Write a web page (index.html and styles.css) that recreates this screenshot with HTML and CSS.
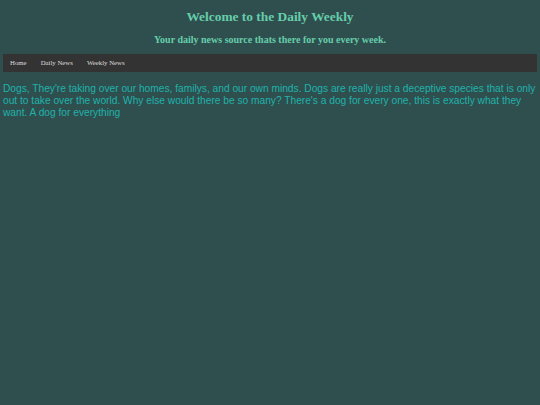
FILE: index.html
```html
<!DOCTYPE html>
<html>
<head>
<meta charset="utf-8">
<link rel="stylesheet" href="styles.css">
</head>
<body>
<header class="masthead">
  <h1 class="title">Welcome to the Daily Weekly</h1>
  <h2 class="tagline">Your daily news source thats there for you every week.</h2>
</header>
<nav class="navbar">
  <a class="nav-link" href="#">Home</a>
  <a class="nav-link" href="#">Daily News</a>
  <a class="nav-link" href="#">Weekly News</a>
</nav>
<p class="story">Dogs, They're taking over our homes, familys, and our own minds. Dogs are really just a deceptive species that is only out to take over the world. Why else would there be so many? There's a dog for every one, this is exactly what they want. A dog for everything</p>
</body>
</html>
```
FILE: styles.css
```css
html, body {
  background: #2f4f4f;
}
body {
  margin: 0;
  padding: 0 3px;
  font-family: "Liberation Serif", serif;
}
.masthead {
  text-align: center;
  color: #66cdaa;
  padding-top: 9px;
}
.title {
  margin: 0;
  font-size: 13.4px;
  line-height: 16px;
  font-weight: bold;
}
.tagline {
  margin: 9px 0 0;
  font-size: 10px;
  line-height: 12px;
  font-weight: bold;
}
.navbar {
  margin-top: 8px;
  background: #333333;
  display: flex;
  height: 18px;
  align-items: center;
}
.nav-link {
  color: #dddddd;
  text-decoration: none;
  font-size: 6.8px;
  padding: 0 7px;
  line-height: 8px;
}
.story {
  margin: 11px 0 0;
  font-family: "Liberation Sans", Arial, sans-serif;
  font-size: 10.2px;
  line-height: 12px;
  color: #20b2aa;
}
```
